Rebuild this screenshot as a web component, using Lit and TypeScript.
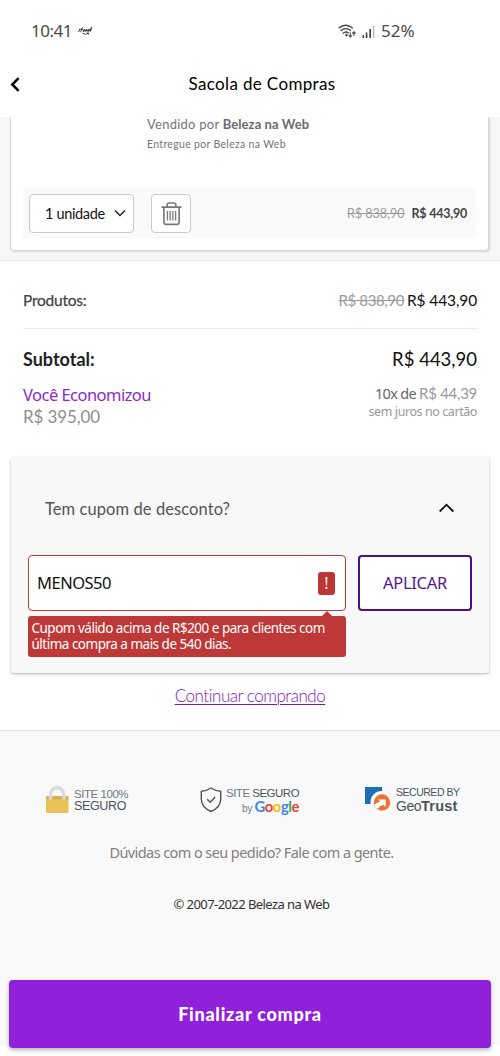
import { LitElement, html, css } from "lit";
import { customElement } from "lit/decorators.js";

@customElement("app-root")
export class AppRoot extends LitElement {
  static styles = css`
    :host {
      display: flex;
      flex-direction: column;
      box-sizing: border-box;
      width: 500px;
      height: 1056px;
      overflow: hidden;
      background: #fff;
      color: #111;
      font-family: Lato, sans-serif;
      white-space: nowrap;
    }
    * { box-sizing: border-box; }
    svg { display: block; flex: none; }
    button, input { font: inherit; color: inherit; margin: 0; padding: 0; }
    .noto { font-family: "Noto Sans", sans-serif; }
    .row { display: flex; align-items: center; justify-content: space-between; }

    .status {
      display: flex;
      align-items: center;
      height: 62px;
      padding-left: 31px;
      font: 17px/24px "Noto Sans", sans-serif;
      color: #4a4a4a;
    }
    .clock { width: 47px; letter-spacing: -0.5px; }
    .brand { margin-right: 245px; }
    .signal { margin: 1px 6px 0 6px; }
    .wifi { margin-top: 1px; }

    .header {
      display: grid;
      grid-template-columns: 24px 1fr 24px;
      align-items: center;
      height: 55px;
      padding: 0 0 11px 9px;
    }
    .header h1 {
      margin: 0;
      padding-left: 15px;
      text-align: center;
      font-size: 17px;
      font-weight: 400;
      line-height: 24px;
      letter-spacing: 0.36px;
      color: #000;
    }

    .bag {
      height: 144px;
      padding: 0 11px 9px 10px;
      background: #f7f7f7;
      border-bottom: 1px solid #e4e4e4;
    }
    .product {
      height: 134px;
      padding: 0 12px;
      background: #fff;
      border: 1px solid #d8d8d8;
      border-top: 0;
      border-radius: 0 0 4px 4px;
      box-shadow: 1px 1px 2px rgba(0, 0, 0, 0.14);
    }
    .seller { height: 71px; padding-left: 124px; color: #757575; }
    .seller p { margin: 0; }
    .sold { font-size: 13px; line-height: 15px; letter-spacing: 0.25px; }
    .sold b { letter-spacing: 0.06px; color: #6a6a6a; }
    .shipped { padding-top: 6px; font-size: 10.5px; line-height: 13px; letter-spacing: 0.32px; }
    .controls { height: 50px; padding: 0 9px 0 6px; background: #fafafa; }
    .left { display: flex; gap: 17px; }
    .quantity, .remove {
      display: flex;
      align-items: center;
      height: 39px;
      background: #fff;
      border: 1px solid #c9c9c9;
      border-radius: 4px;
    }
    .quantity {
      width: 105px;
      padding: 0 7px 0 15px;
      justify-content: space-between;
      font-size: 14.5px;
      letter-spacing: -0.35px;
    }
    .remove { width: 40px; justify-content: center; }
    .old { color: #9b9b9b; text-decoration: line-through; }
    .price { display: flex; gap: 7px; font-size: 12.5px; }
    .price b { color: #444; letter-spacing: -0.22px; }

    .summary { height: 196px; padding: 0 23px 0 23px; }
    .products { height: 68px; padding-top: 10px; border-bottom: 1px solid #eaeaea; }
    .products .label { font-size: 15.5px; letter-spacing: -0.22px; color: #444; -webkit-text-stroke: 0.25px #444; }
    .products .old { margin-right: 3px; font-size: 15px; letter-spacing: -0.37px; }
    .products .now { font-size: 15.5px; letter-spacing: -0.13px; }
    .subtotal { height: 59px; font-size: 18.5px; line-height: 24px; }
    .subtotal b { font-size: 18px; color: #222; }
    .savings { display: flex; justify-content: space-between; align-items: flex-start; margin-top: -5px; }
    .saved { font-size: 16.5px; line-height: 23px; letter-spacing: -0.53px; color: #8a2bc9; }
    .amount { font-size: 17px; line-height: 22px; letter-spacing: -0.11px; color: #8e8e8e; }
    .installments { text-align: right; }
    .times { font-size: 14.5px; line-height: 20px; letter-spacing: -0.69px; color: #666; }
    .times span { font-family: Lato, sans-serif; font-size: 15px; letter-spacing: -0.27px; color: #999; }
    .interest { font-size: 12.5px; line-height: 17px; letter-spacing: -0.42px; color: #999; }

    .coupon {
      height: 216px;
      margin: 0 11px;
      padding: 0 17px;
      background: #f8f8f8;
      border-radius: 3px;
      box-shadow: 0 1px 3px rgba(0, 0, 0, 0.3);
    }
    .toggle { height: 98px; padding: 5px 17px 0; }
    .toggle span { font-size: 16.5px; letter-spacing: 0.08px; color: #555; }
    .toggle svg { margin-top: -2px; }
    .form { display: grid; grid-template-columns: 318px 114px; column-gap: 12px; }
    .field {
      display: flex;
      align-items: center;
      height: 56px;
      padding: 0 10px 0 8px;
      background: #fff;
      border: 1px solid #b93a3a;
      border-radius: 4px;
    }
    .field input {
      flex: 1;
      min-width: 0;
      border: 0;
      outline: 0;
      background: none;
      font: 16.5px/24px "Noto Sans", sans-serif;
      letter-spacing: -0.5px;
      color: #111;
    }
    .alert {
      width: 17px;
      height: 23px;
      border-radius: 3px;
      background: #bf3535;
      color: #fff;
      text-align: center;
      font: 16px/22px "Noto Sans", sans-serif;
    }
    .error {
      position: relative;
      height: 41px;
      margin-top: 5px;
      padding: 5px 0 0 3.5px;
      border-radius: 3px;
      background: #bf3838;
      color: #fff;
      font: 13.5px/15.5px "Noto Sans", sans-serif;
      letter-spacing: -0.5px;
    }
    .error::before {
      content: "";
      position: absolute;
      top: -5px;
      right: 14px;
      border: 5px solid transparent;
      border-top: 0;
      border-bottom-color: #bf3838;
    }
    .apply {
      height: 56px;
      background: #fff;
      border: 2px solid #4b0f86;
      border-radius: 4px;
      font: 16.5px/24px "Noto Sans", sans-serif;
      letter-spacing: -0.29px;
      color: #541690;
    }
    .continue {
      display: flex;
      justify-content: center;
      height: 57px;
      padding-top: 11px;
    }
    .continue a {
      font-size: 17px;
      font-weight: 300;
      line-height: 24px;
      letter-spacing: -0.47px;
      color: #7d16b8;
      text-decoration: underline;
      text-decoration-thickness: 1px;
      text-underline-offset: 2px;
    }

    .footer {
      display: flex;
      flex-direction: column;
      align-items: center;
      height: 315px;
      background: #f9f9f9;
      border-top: 1px solid #e2e2e2;
    }
    .badges {
      display: grid;
      grid-template-columns: 155px 164px 1fr;
      align-self: stretch;
      padding: 53px 0 0 45px;
      font-family: "Liberation Sans", Arial, sans-serif;
      color: #4b555b;
    }
    .badge { display: flex; align-items: flex-start; height: 32px; }
    .badge p { margin: 0; line-height: 12px; }
    .lock-text { padding: 4px 0 0 4px; }
    .lock-text .top { font-size: 11.5px; letter-spacing: -0.45px; color: #70787d; }
    .lock-text .bottom { font-size: 12.5px; letter-spacing: -0.36px; }
    .google-text { padding: 3px 0 0 4px; }
    .google-text .top { font-size: 11.5px; letter-spacing: -0.5px; color: #70787d; }
    .google-text .top span { color: #4b555b; }
    .google-text .bottom { display: flex; justify-content: flex-end; align-items: baseline; gap: 2px; font-size: 10px; line-height: 14px; color: #70787d; }
    .google { font: 700 14.8px/14px Lato, sans-serif; letter-spacing: -0.4px; }
    .g-blue { color: #4285f4; }
    .g-red { color: #ea4335; }
    .g-yellow { color: #fbbc05; }
    .g-green { color: #34a853; }
    .trust-text { padding: 2px 0 0 5px; }
    .trust-text .top { font-size: 10.5px; letter-spacing: -0.48px; }
    .trust-text .bottom { font-size: 14px; line-height: 17px; letter-spacing: -0.5px; }
    .trust-text b { font-size: 14.5px; letter-spacing: 0.25px; }

    .help {
      margin-top: 25px;
      font: 14.5px/22px "Noto Sans", sans-serif;
      letter-spacing: -0.58px;
      color: #808080;
      padding-left: 3px;
    }
    .copyright {
      margin-top: 31px;
      font: 13px/20px "Noto Sans", sans-serif;
      letter-spacing: -0.57px;
      color: #333;
      padding-left: 3px;
    }
    .checkout {
      flex: none;
      width: 482px;
      height: 68px;
      margin-top: 66px;
      border: 0;
      border-radius: 4px;
      background: #9120da;
      box-shadow: 0 2px 4px rgba(0, 0, 0, 0.3);
      color: #fff;
      font: 900 18px/24px Lato, sans-serif;
      letter-spacing: 0.72px;
    }
  `;

  render() {
    return html`
      <div class="status">
        <span class="clock">10:41</span>
        <svg class="brand" width="15" height="9" viewBox="0 0 15 9" fill="none" stroke="#444" stroke-width="1" stroke-linecap="round">
          <path d="M.9 4.600 1.700 2M2.800 4.800 3.900 1q.3-.6.9-.4M2.700 2.400h1.800" />
          <path d="M5.500 4.200 6.100 2.700M8 4.100l.6-1.400M10.400 4 11 2.600M12.300 3.900 13.500.8M5.500 3.400h6.500" stroke-width="1.500" />
          <path d="M4.800 6.400q2.800 1.900 5.400 0M9.300 6h1.300l-.2 1.200" />
        </svg>
        <svg class="wifi" width="18" height="15" viewBox="0 0 18 15" fill="none" stroke="#484848" stroke-width="1.4">
          <path d="M.7 4.200q7-6 14.200 0M2.700 6.900q5-4.400 10.200-.2M4.800 9.400q3-2.700 6-.2" />
          <path d="M7.500 10.300 9.400 12" stroke-width="2" />
          <path d="M12.300 8.500v4.300M10.700 11.300l1.600 1.700 1.600-1.700M15.900 12V8M14.300 9.500l1.600-1.700 1.600 1.700" stroke-width="1.100" />
        </svg>
        <svg class="signal" width="13" height="13" viewBox="0 0 13 13">
          <path fill="#484848" d="M.5 10h1.600v3H.5zM3.700 7.500h1.700V13H3.700zM7.300 4H9v9H7.300z" />
          <path fill="#bbb" d="M10.800.5h1.600V13h-1.600z" />
        </svg>
        <span>52%</span>
      </div>

      <header class="header">
        <svg width="12" height="15" viewBox="0 0 12 15" fill="none" stroke="#000" stroke-width="2.500">
          <path d="M9.600 1.200 3.300 7.500l6.300 6.300" />
        </svg>
        <h1>Sacola de Compras</h1>
      </header>

      <section class="bag">
        <div class="product">
          <div class="seller">
            <p class="sold">Vendido por <b>Beleza na Web</b></p>
            <p class="shipped">Entregue por Beleza na Web</p>
          </div>
          <div class="controls row">
            <div class="left">
              <div class="quantity">
                <span>1 unidade</span>
                <svg width="12" height="8" viewBox="0 0 12 8" fill="none" stroke="#222" stroke-width="1.500">
                  <path d="m1 1.500 5 5 5-5" />
                </svg>
              </div>
              <button class="remove" aria-label="Remover">
                <svg width="21" height="25" viewBox="0 0 21 25" fill="none" stroke="#777" stroke-width="1.600">
                  <path d="M.5 6.100h20M6.200 6V3.600Q6.300 2 8 2h5q1.800.1 1.900 1.600V6M2.900 6.500v15q.1 1.800 1.900 1.900h11.400q1.800-.1 1.900-1.900v-15" />
                  <path d="M6.500 10v9.500M9.200 10v9.500M11.900 10v9.500M14.600 10v9.500" stroke-width="1.300" />
                </svg>
              </button>
            </div>
            <div class="price"><span class="old">R$ 838,90</span><b>R$ 443,90</b></div>
          </div>
        </div>
      </section>

      <section class="summary">
        <div class="products row">
          <span class="label">Produtos:</span>
          <div><span class="old">R$ 838,90</span><span class="now">R$ 443,90</span></div>
        </div>
        <div class="subtotal row"><b>Subtotal:</b><span>R$ 443,90</span></div>
        <div class="savings">
          <div>
            <div class="saved noto">Você Economizou</div>
            <div class="amount">R$ 395,00</div>
          </div>
          <div class="installments noto">
            <div class="times">10x de <span>R$ 44,39</span></div>
            <div class="interest">sem juros no cartão</div>
          </div>
        </div>
      </section>

      <section class="coupon">
        <div class="toggle row">
          <span>Tem cupom de desconto?</span>
          <svg width="17" height="10" viewBox="0 0 17 10" fill="none" stroke="#111" stroke-width="1.800">
            <path d="m1.700 8.500 6.800-6.800 6.800 6.800" />
          </svg>
        </div>
        <div class="form">
          <div>
            <div class="field">
              <input .value=${"MENOS50"} aria-label="Cupom" />
              <span class="alert">!</span>
            </div>
            <div class="error">Cupom válido acima de R$200 e para clientes com<br />última compra a mais de 540 dias.</div>
          </div>
          <button class="apply">APLICAR</button>
        </div>
      </section>
      <div class="continue"><a>Continuar comprando</a></div>

      <footer class="footer">
        <div class="badges">
          <div class="badge">
            <svg width="25" height="30" viewBox="0 0 25 30">
              <rect x="1" y="12" width="22.500" height="17" rx="1.500" fill="#e9c257" />
              <path d="M1 15.200V13.500q0-1.200 1.300-1.200H22q1.500 0 1.500 1.200v1.700z" fill="#d3b052" />
              <path d="M5.500 14V10.500a6.700 6.700 0 0 1 13.400 0V14" fill="none" stroke="#d9dcdf" stroke-width="3.400" stroke-linecap="round" />
            </svg>
            <div class="lock-text">
              <p class="top">SITE 100%</p>
              <p class="bottom">SEGURO</p>
            </div>
          </div>
          <div class="badge">
            <svg width="22" height="30" viewBox="0 0 22 30" fill="none" stroke="#4b555b" stroke-width="1.400" stroke-linejoin="round">
              <path d="M11 4Q6.500 7 1.300 7.300v8q.2 8.200 9.700 12.200 9.500-4 9.700-12.200v-8Q15.500 7 11 4z" />
              <path d="m7.200 15.300 3 3 5-5.300" />
            </svg>
            <div class="google-text">
              <p class="top">SITE <span>SEGURO</span></p>
              <p class="bottom">
                by <span class="google"><span class="g-blue">G</span><span class="g-red">o</span><span class="g-yellow">o</span><span class="g-blue">g</span><span class="g-green">l</span><span class="g-red">e</span></span>
              </p>
            </div>
          </div>
          <div class="badge">
            <svg width="27" height="30" viewBox="0 0 27 30">
              <path d="M1 3h17v17H1z" fill="#1d6fb8" />
              <circle cx="17.500" cy="18" r="11" fill="#f9f9f9" />
              <circle cx="18" cy="18.500" r="8.200" fill="#ec7236" />
              <path d="M9.500 21.500q2.500-2.700 6.800-4.100l-2.100-2h7.500v7.500l-2.200-2.200q-3.800.9-6 4.300z" fill="#fff" />
            </svg>
            <div class="trust-text">
              <p class="top">SECURED BY</p>
              <p class="bottom">Geo<b>Trust</b></p>
            </div>
          </div>
        </div>
        <div class="help">Dúvidas com o seu pedido? Fale com a gente.</div>
        <div class="copyright">© 2007-2022 Beleza na Web</div>
        <button class="checkout">Finalizar compra</button>
      </footer>
    `;
  }
}
